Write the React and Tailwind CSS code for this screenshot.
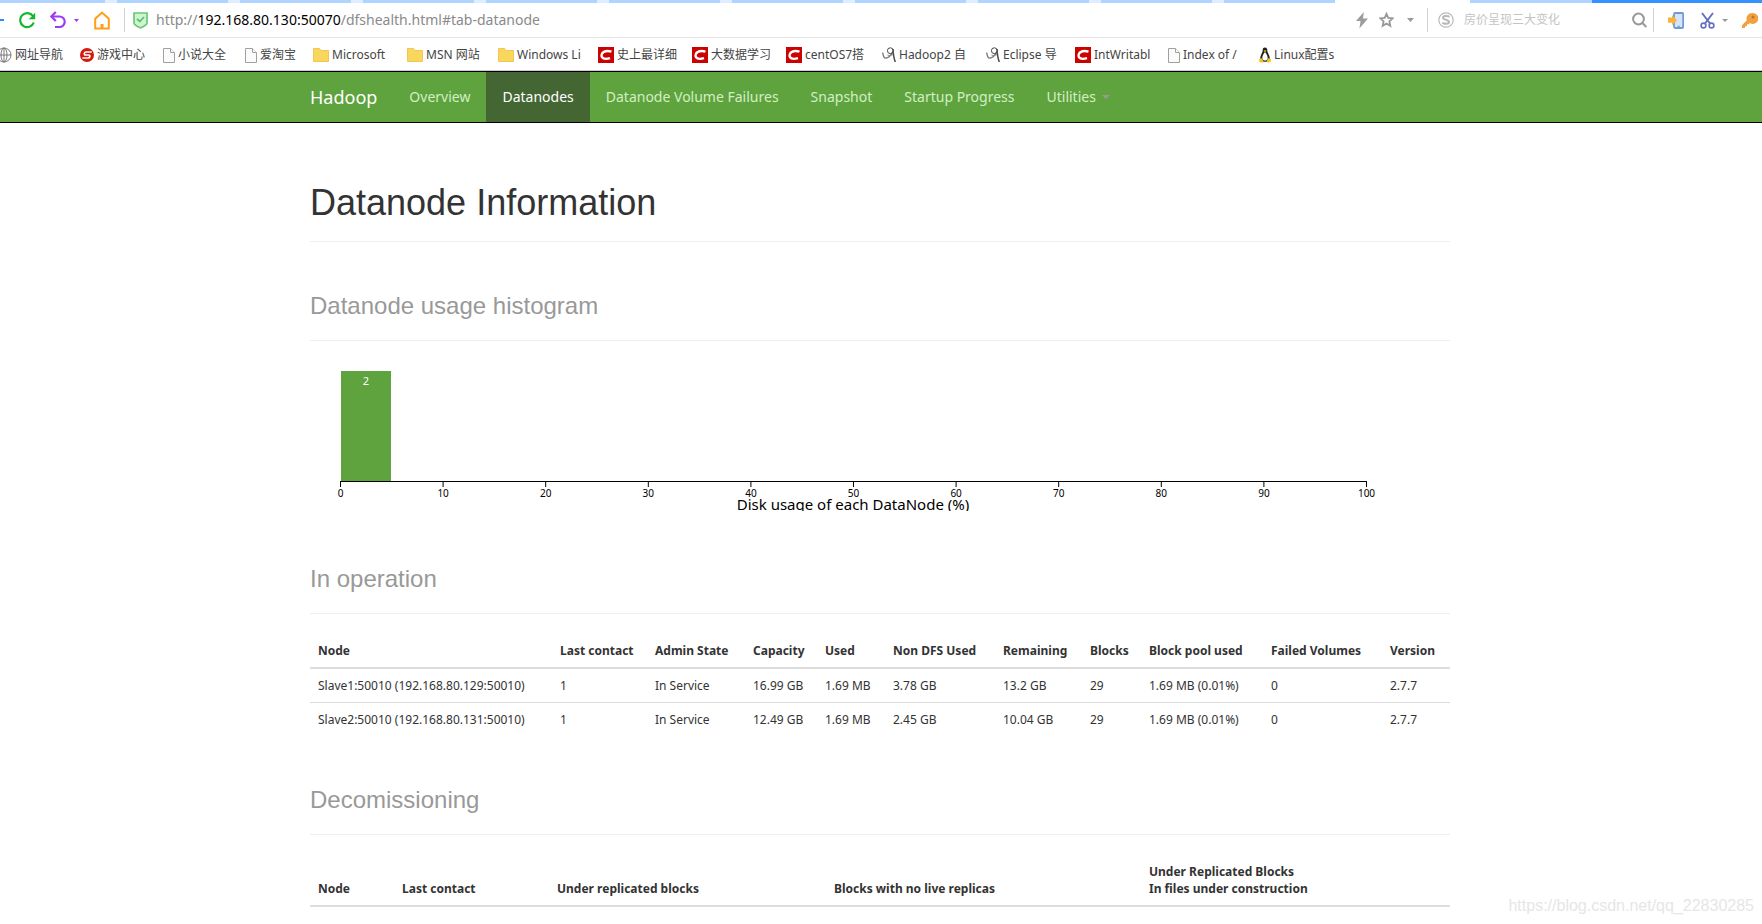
import clsx from "clsx";

const bookmarks = [
  { icon: "globe", label: "网址导航", width: "w-[84px]" },
  { icon: "game", label: "游戏中心", width: "w-[83px]" },
  { icon: "page", label: "小说大全", width: "w-[82px]" },
  { icon: "page", label: "爱淘宝", width: "w-[68px]" },
  { icon: "folder", label: "Microsoft", width: "w-[94px]" },
  { icon: "folder", label: "MSN 网站", width: "w-[91px]" },
  { icon: "folder", label: "Windows Li", width: "w-[100px]" },
  { icon: "csdn", label: "史上最详细", width: "w-[94px]" },
  { icon: "csdn", label: "大数据学习", width: "w-[94px]" },
  { icon: "csdn", label: "centOS7搭", width: "w-[96px]" },
  { icon: "blog", label: "Hadoop2 自", width: "w-[104px]" },
  { icon: "blog", label: "Eclipse 导", width: "w-[89px]" },
  { icon: "csdn", label: "IntWritabl", width: "w-[93px]" },
  { icon: "page", label: "Index of /", width: "w-[91px]" },
  { icon: "linux", label: "Linux配置s", width: "w-[91px]" },
];

const navItems = [
  "Overview",
  "Datanodes",
  "Datanode Volume Failures",
  "Snapshot",
  "Startup Progress",
];

const operationColumns = [
  { key: "node", title: "Node", width: "w-[242px]" },
  { key: "contact", title: "Last contact", width: "w-[95px]" },
  { key: "state", title: "Admin State", width: "w-[98px]" },
  { key: "capacity", title: "Capacity", width: "w-[72px]" },
  { key: "used", title: "Used", width: "w-[68px]" },
  { key: "nonDfs", title: "Non DFS Used", width: "w-[110px]" },
  { key: "remaining", title: "Remaining", width: "w-[87px]" },
  { key: "blocks", title: "Blocks", width: "w-[59px]" },
  { key: "pool", title: "Block pool used", width: "w-[122px]" },
  { key: "failed", title: "Failed Volumes", width: "w-[119px]" },
  { key: "version", title: "Version", width: "w-auto" },
];

const nodes = [
  {
    node: "Slave1:50010 (192.168.80.129:50010)",
    contact: "1",
    state: "In Service",
    capacity: "16.99 GB",
    used: "1.69 MB",
    nonDfs: "3.78 GB",
    remaining: "13.2 GB",
    blocks: "29",
    pool: "1.69 MB (0.01%)",
    failed: "0",
    version: "2.7.7",
  },
  {
    node: "Slave2:50010 (192.168.80.131:50010)",
    contact: "1",
    state: "In Service",
    capacity: "12.49 GB",
    used: "1.69 MB",
    nonDfs: "2.45 GB",
    remaining: "10.04 GB",
    blocks: "29",
    pool: "1.69 MB (0.01%)",
    failed: "0",
    version: "2.7.7",
  },
];

const ticks = [0, 10, 20, 30, 40, 50, 60, 70, 80, 90, 100];

function BookmarkIcon({ name }) {
  switch (name) {
    case "globe":
      return (
        <svg className="-ml-1 h-4 w-4 shrink-0" viewBox="0 0 16 16" fill="none" stroke="#777">
          <circle cx="8" cy="8" r="7" />
          <ellipse cx="8" cy="8" rx="3" ry="7" />
          <path d="M1 8h14M8 1v14" />
        </svg>
      );
    case "game":
      return (
        <svg className="h-3.5 w-3.5 shrink-0" viewBox="0 0 14 14">
          <circle cx="7" cy="7" r="7" fill="#d31a0c" />
          <path
            d="M11.8 4H6C4.200 4 3.600 7 5.400 7h3.400c1.700 0 1.200 3-.6 3H2.400"
            fill="none"
            stroke="#fff"
            strokeWidth="1.7"
          />
        </svg>
      );
    case "page":
      return (
        <svg className="h-4 w-3 shrink-0" viewBox="0 0 12 16" fill="#fbfbfb" stroke="#a0a0a0">
          <path d="M.5 1.500h7l4 4v10H.5z" />
          <path d="M7.500 1.500v4h4" />
        </svg>
      );
    case "folder":
      return (
        <svg className="h-4 w-4 shrink-0" viewBox="0 0 16 16">
          <path d="M.5 1.500h6l1.500 2h7.500v11H.5z" fill="#f9d65c" stroke="#f3c557" />
        </svg>
      );
    case "csdn":
      return (
        <svg className="h-4 w-4 shrink-0" viewBox="0 0 16 16">
          <path d="M0 0h16v16H0z" fill="#cb0202" />
          <path
            d="M13.500 4.600c-2-.6-5.500-.9-7.600.3C3.800 6 2.900 8.700 4 10.300c1.200 1.700 5.200 1.700 8 .9"
            fill="none"
            stroke="#fff"
            strokeWidth="2.400"
          />
        </svg>
      );
    case "blog":
      return (
        <svg className="h-4 w-3.5 shrink-0" viewBox="0 0 14 16" fill="none" stroke="#4a4a4a">
          <path d="M.5 5.500C1.500 8 1.200 11 3.500 11.200 6 11 9 8.500 10.300 5.500" stroke="#777" strokeWidth="1.300" />
          <circle cx="8.300" cy="3.700" r="2.900" />
          <path d="M11 2c.2 4.500.5 8.500 2.300 13" strokeWidth="1.500" />
          <path d="M5.500 8c1.500 1 3.500.5 5.500-.5" stroke="#888" />
        </svg>
      );
    default:
      return (
        <svg className="h-4 w-3 shrink-0" viewBox="0 0 12 16">
          <path d="M6 .6c-1.800 0-2.400 1.200-2.300 3 .1 2-2.300 4.200-2.600 7.900L3 14.800h6l1.900-3.300C10.600 7.800 8.300 6 8.300 3.800 8.400 2 7.800.6 6 .6z" fill="#222" />
          <path d="M6 5c-1.500 1.700-3 4-2.700 6.800.6 2.400 4.800 2.400 5.400 0C9 9.200 7.400 6.700 6 5z" fill="#fff" />
          <path d="M4.600 3.800 6 3.200l1.500.6L6 5.200z" fill="#f5c518" />
          <path d="M.1 12.200 2.300 11l2.400 3.200-1.300 1.600-3.200-1zM11.900 12.200 9.600 11l-2.200 3.200 1.300 1.600 3.100-1z" fill="#f5c518" />
        </svg>
      );
  }
}

function Caret({ className }) {
  return (
    <svg className={clsx("shrink-0", className)} viewBox="0 0 8 4" fill="currentColor" preserveAspectRatio="none">
      <path d="M0 0h8L4 4z" />
    </svg>
  );
}

function TabStrip() {
  return (
    <div className="flex h-[3px] gap-3 overflow-hidden bg-[#deedff]">
      <div className="w-[105px] shrink-0 bg-[#aed4ff]" />
      {ticks.slice(1).map((n) => (
        <div key={n} className="w-[111px] shrink-0 bg-[#aed4ff]" />
      ))}
      <div className="-ml-3 flex grow">
        <div className="w-[135px] bg-white" />
        <div className="w-[122px] bg-[#aed4ff]" />
        <div className="grow bg-[#3593ff]" />
      </div>
    </div>
  );
}

function AddressBar() {
  return (
    <div className="flex h-[35px] items-center border-b border-[#e5e5e5] pr-1">
      <button aria-label="Back" className="h-0.5 w-1 bg-[#2b8cff]" />
      <button aria-label="Reload" className="ml-3.5">
        <svg className="h-[18px] w-[18px]" viewBox="0 0 18 18" fill="none" stroke="#10b92a" strokeWidth="2.200">
          <path d="M15 5.200A7 7 0 1 0 15.800 11.500" />
          <path d="M17.200 1.500v6.700h-6.700l3-2.500z" fill="#10b92a" stroke="none" />
        </svg>
      </button>
      <button aria-label="Undo close" className="ml-3.5">
        <svg className="h-[18px] w-4" viewBox="0 0 16 18" fill="none" stroke="#9a3cf5" strokeWidth="2.200">
          <path d="M2 5.500h7.500a5 5 0 0 1 0 10.500H5" />
          <path d="M5.800 1 1.400 5.500l4.400 4.500" />
        </svg>
      </button>
      <button aria-label="Closed tabs" className="ml-2 text-[#9a3cf5]">
        <Caret className="h-[3px] w-[5px]" />
      </button>
      <button aria-label="Home" className="ml-[15px]">
        <svg className="h-[19px] w-4" viewBox="0 0 16 19" fill="none" stroke="#ff9f15" strokeWidth="2">
          <path d="M1.200 17.500V7.800L8 1.500l6.800 6.300v9.700z" />
          <path d="M8 13v5" strokeWidth="3" />
        </svg>
      </button>
      <div className="ml-3.5 h-6 w-px bg-[#d0d0d0]" />
      <svg className="ml-2 h-[18px] w-[15px] shrink-0" viewBox="0 0 15 18">
        <path d="M1 2h13v10c0 2.200-3.500 3.500-6.500 5C4.500 15.500 1 14.200 1 12z" fill="#cdf5cf" stroke="#6cc777" strokeWidth="1.700" />
        <path d="m4 7.800 2.800 2.700L11 6" fill="none" stroke="#5fbf6c" strokeWidth="1.800" />
      </svg>
      <div className="ml-2 grow text-sm text-[#8a8a8a]">
        http://<span className="text-black">192.168.80.130:50070</span>/dfshealth.html#tab-datanode
      </div>
      <button aria-label="Speed mode">
        <svg className="h-[18px] w-3" viewBox="0 0 12 18" fill="#9c9c9c">
          <path d="M7.800 1 0 10h4.600L3.400 17.500 12 7.500H7z" />
        </svg>
      </button>
      <button aria-label="Favorite" className="ml-[11px]">
        <svg className="h-4 w-[15px]" viewBox="0 0 15 16" fill="none" stroke="#999" strokeWidth="1.800">
          <path d="m7.500 1.800 1.800 4 4.300.5-3.200 3 .9 4.500-3.800-2.300-3.800 2.300.9-4.500-3.200-3 4.300-.5z" />
        </svg>
      </button>
      <button aria-label="More" className="ml-[13px] text-[#999]">
        <Caret className="h-1 w-[7px]" />
      </button>
      <div className="ml-[13px] h-6 w-px bg-[#d0d0d0]" />
      <svg className="ml-2.5 h-4 w-4 shrink-0" viewBox="0 0 16 16" fill="none" stroke="#b8b8b8">
        <circle cx="8" cy="8" r="7.200" strokeWidth="1.200" />
        <path d="M11.500 4.800C9.500 3.600 5 3.700 5 5.800c0 2.300 6 1.700 6 4.200 0 2.300-4.600 2.200-6.700.9" strokeWidth="2" />
      </svg>
      <input
        aria-label="Search"
        placeholder="房价呈现三大变化"
        className="ml-2.5 w-[166px] text-xs outline-none placeholder:text-[#c4c4c4]"
      />
      <button aria-label="Go" className="ml-0.5">
        <svg className="h-4 w-[15px]" viewBox="0 0 15 16" fill="none" stroke="#999" strokeWidth="2">
          <circle cx="6.500" cy="7" r="5.400" />
          <path d="m10.500 11 3.800 4" />
        </svg>
      </button>
      <div className="ml-1.5 h-6 w-px bg-[#d0d0d0]" />
      <button aria-label="Send to phone" className="ml-3.5">
        <svg className="h-[17px] w-4" viewBox="0 0 16 17">
          <rect x="6" y="1" width="9.200" height="15" rx="1.200" fill="#d5e4f8" stroke="#6f9ad2" strokeWidth="1.800" />
          <path d="M9.500 14.300h2.500" stroke="#6f9ad2" />
          <path d="M0 5.500h4V3l5 5.200-5 5.100v-2.600H0z" fill="#f8b43c" />
        </svg>
      </button>
      <button aria-label="Screenshot" className="ml-4">
        <svg className="h-[17px] w-[15px]" viewBox="0 0 15 17" fill="none" stroke="#6470c0" strokeWidth="2">
          <path d="m2 1 8 10.500M13 1 5 11.500" />
          <circle cx="3.500" cy="13.500" r="2.400" strokeWidth="1.600" />
          <circle cx="11.500" cy="13.500" r="2.400" strokeWidth="1.600" />
        </svg>
      </button>
      <button aria-label="Screenshot options" className="ml-[7px] text-[#999]">
        <Caret className="h-[3px] w-[6px]" />
      </button>
      <button aria-label="Passwords" className="ml-3.5">
        <svg className="h-[17px] w-4" viewBox="0 0 16 17" fill="#f3a040">
          <path d="M10 1a5.500 5.500 0 0 0-5.200 7.200L0 13.200V16h3v-1.800h2v-2h1.800l1-1.200A5.500 5.500 0 1 0 10 1z" />
          <circle cx="11" cy="5" r="1.500" fill="#b9752a" />
        </svg>
      </button>
    </div>
  );
}

function BookmarkBar() {
  return (
    <div className="flex h-8 items-center overflow-hidden pt-px">
      {bookmarks.map(({ icon, label, width }, i) => (
        <a
          key={i}
          href="#"
          className={clsx("flex shrink-0 items-center gap-[3px] whitespace-nowrap text-xs text-[#444]", width, i === 0 && "mr-[-4px]")}
        >
          <BookmarkIcon name={icon} />
          {label}
        </a>
      ))}
    </div>
  );
}

function NavBar() {
  return (
    <nav className="border-y border-black bg-[#5fa33e] pr-0.5">
      <div className="mx-auto flex h-[50px] max-w-[1140px] items-center">
        <a href="#" className="pr-4 text-lg text-white">
          Hadoop
        </a>
        {navItems.map((item) => (
          <a
            key={item}
            href="#"
            className={clsx(
              "flex h-full items-center px-4 text-sm whitespace-nowrap",
              item === "Datanodes" ? "bg-[#446633] text-white" : "text-[#d2efc4]"
            )}
          >
            {item}
          </a>
        ))}
        <button className="flex h-full items-center gap-1.5 px-4 text-sm text-[#d2efc4]">
          Utilities
          <Caret className="h-1 w-2 text-[#999]" />
        </button>
      </div>
    </nav>
  );
}

function SectionTitle({ children }) {
  return (
    <h3 className="border-b border-[#eee] pb-[21px] font-['Liberation_Sans',Arial,sans-serif] text-2xl leading-[26px] text-[#999]">
      {children}
    </h3>
  );
}

function Histogram() {
  return (
    <svg className="mt-5 block h-[150px] w-full max-w-[1140px]" viewBox="0 0 1140 150" preserveAspectRatio="xMinYMin meet">
      <rect x="31" y="10" width="50" height="110" fill="#5fa33e" />
      <text x="56" y="24" textAnchor="middle" className="fill-white text-[11px]">
        2
      </text>
      <path d="M30.500 126v-5.500h1026v5.500" fill="none" stroke="#000" />
      {ticks.map((t) => (
        <g key={t} transform={`translate(${30.5 + t * 10.26} 0)`}>
          <path d="M0 120v6" stroke="#000" />
          <text y="136" textAnchor="middle" className="fill-black text-[10px]">
            {t}
          </text>
        </g>
      ))}
      <text x="543" y="149" textAnchor="middle" className="fill-black text-[15px]">
        Disk usage of each DataNode (%)
      </text>
    </svg>
  );
}

function OperationTable() {
  return (
    <table className="mt-5 w-full table-fixed text-left text-xs leading-[17px]">
      <thead>
        <tr className="border-b-2 border-[#ddd]">
          {operationColumns.map((col) => (
            <th key={col.key} className={clsx("p-2 font-bold whitespace-nowrap", col.width)}>
              {col.title}
            </th>
          ))}
        </tr>
      </thead>
      <tbody>
        {nodes.map((row) => (
          <tr key={row.node} className="border-b border-[#ddd] last:border-b-0">
            {operationColumns.map((col) => (
              <td key={col.key} className="p-2 whitespace-nowrap">
                {row[col.key]}
              </td>
            ))}
          </tr>
        ))}
      </tbody>
    </table>
  );
}

function DecommissionTable() {
  return (
    <table className="mt-5 w-full table-fixed text-left text-xs leading-[17px]">
      <thead>
        <tr className="border-b-2 border-[#ddd] align-bottom">
          <th className="w-[84px] p-2">Node</th>
          <th className="w-[155px] p-2">Last contact</th>
          <th className="w-[277px] p-2">Under replicated blocks</th>
          <th className="w-[315px] p-2">Blocks with no live replicas</th>
          <th className="p-2">
            Under Replicated Blocks
            <br />
            In files under construction
          </th>
        </tr>
      </thead>
    </table>
  );
}

export default function App() {
  return (
    <div className="relative min-h-screen bg-white font-['Noto_Sans','Noto_Sans_CJK_SC',sans-serif] text-[#333]">
      <header>
        <TabStrip />
        <AddressBar />
        <BookmarkBar />
        <div className="h-px bg-[#ccc]" />
      </header>
      <NavBar />
      <main className="pr-0.5">
        <div className="mx-auto max-w-[1140px] pt-[60px]">
          <h1 className="border-b border-[#eee] pb-[18px] font-['Liberation_Sans',Arial,sans-serif] text-4xl leading-10">
            Datanode Information
          </h1>
          <section className="mt-[51px]">
            <SectionTitle>Datanode usage histogram</SectionTitle>
            <Histogram />
          </section>
          <section className="mt-[55px]">
            <SectionTitle>In operation</SectionTitle>
            <OperationTable />
          </section>
          <section className="mt-[51px]">
            <SectionTitle>Decomissioning</SectionTitle>
            <DecommissionTable />
          </section>
        </div>
      </main>
      <p className="absolute right-2 bottom-1.5 font-['Liberation_Sans',Arial,sans-serif] text-base text-[#e6e6e6]">
        https://blog.csdn.net/qq_22830285
      </p>
    </div>
  );
}
